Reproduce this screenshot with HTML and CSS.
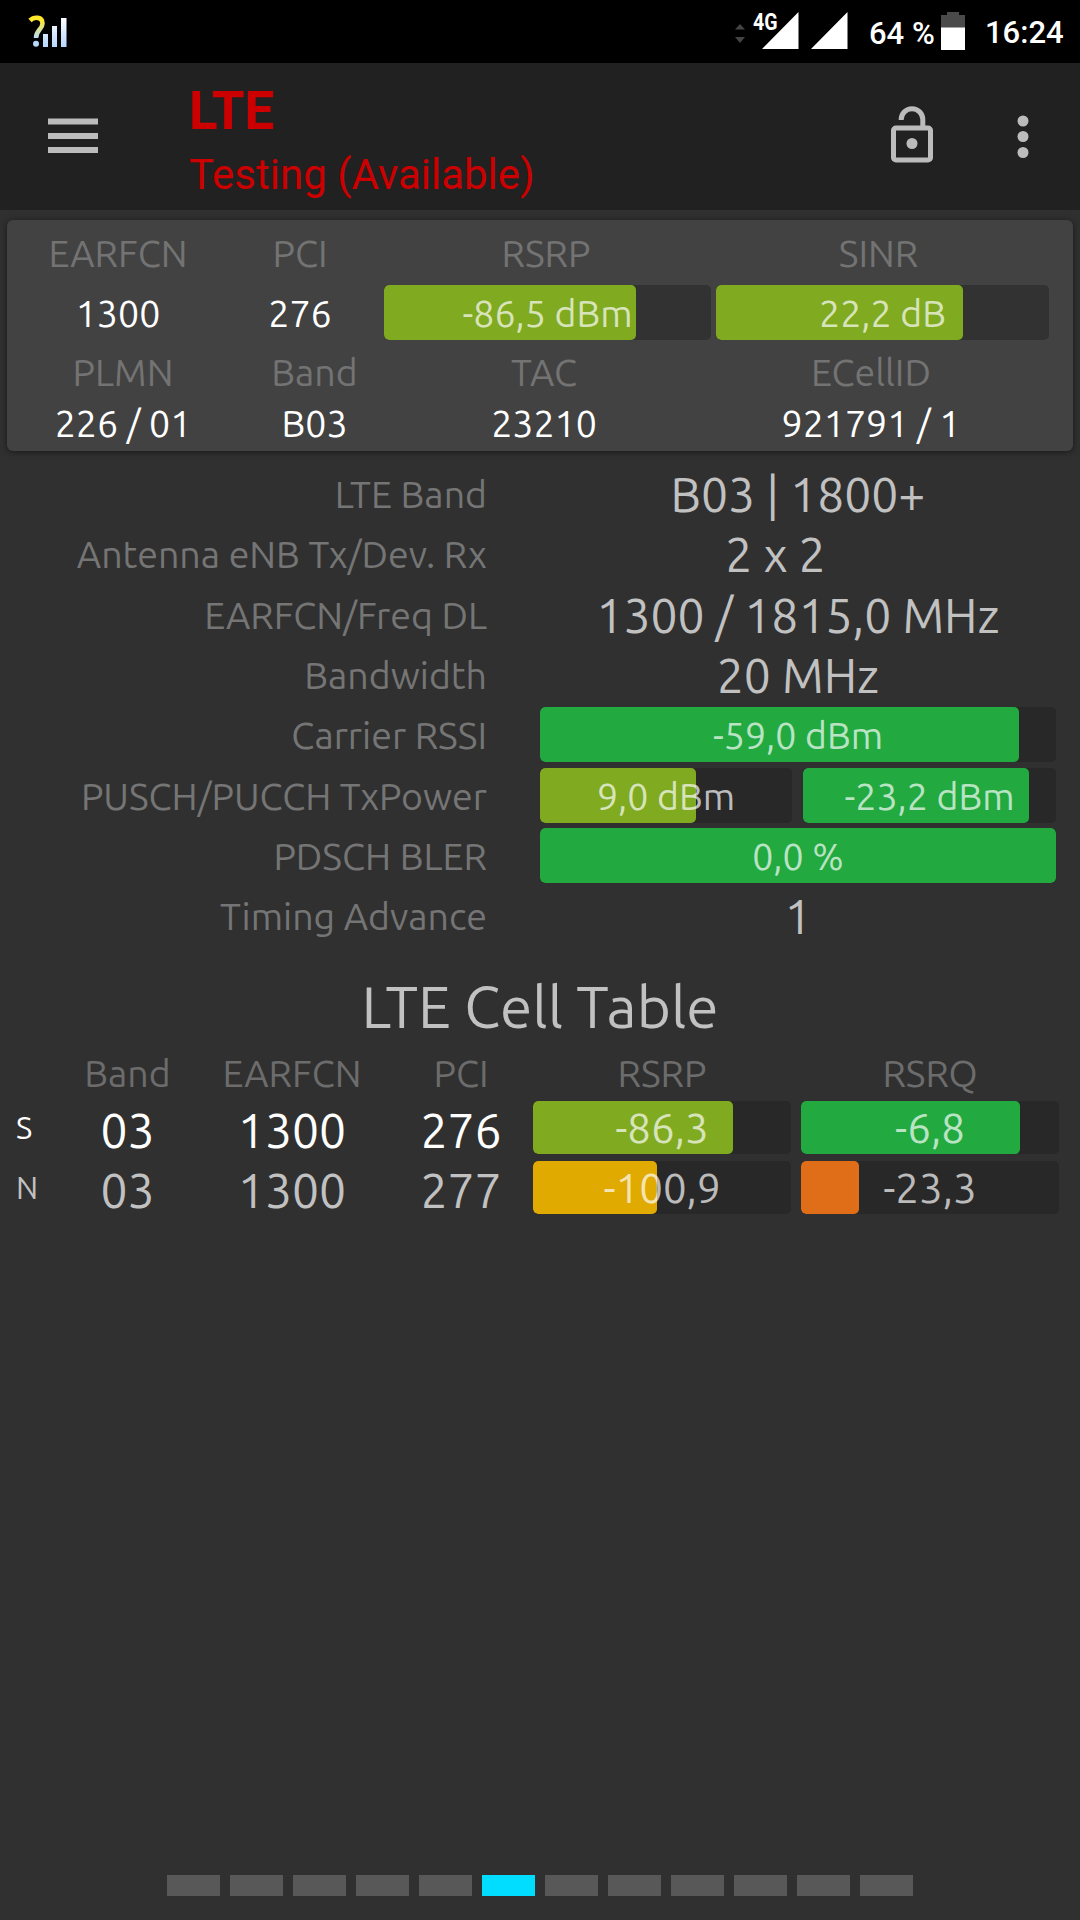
FILE: index.html
```html
<!DOCTYPE html>
<html lang="en">
<head>
  <meta charset="UTF-8">
  <meta name="viewport" content="width=device-width, initial-scale=1.0">
  <title>LTE</title>
  <link rel="stylesheet" href="styles.css">
</head>
<body>
  <header class="status-bar">
    <svg class="unknown-signal" width="40" height="36" viewBox="0 0 40 36">
      <defs>
        <linearGradient id="question" x1="0" y1="0" x2="0" y2="1">
          <stop offset="0.1" stop-color="#ffe928"/>
          <stop offset="1" stop-color="#b8dcff"/>
        </linearGradient>
        <linearGradient id="bars" x1="0" y1="0" x2="0" y2="1">
          <stop offset="0" stop-color="#ffffff"/>
          <stop offset="1" stop-color="#b5d7ff"/>
        </linearGradient>
      </defs>
      <path d="M2 6.500C6 2.500 14.500 2.500 14.500 9.500C14.500 15.500 8 16 8 24" fill="none" stroke="url(#question)" stroke-width="4.600"/>
      <circle cx="8" cy="29.800" r="3" fill="#b5d9fb"/>
      <path d="M15 20h5v13h-5zM24 12h5v21h-5zM33 4h5.500v29H33z" fill="url(#bars)"/>
    </svg>
    <svg class="signals" width="114" height="38" viewBox="0 0 114 38">
      <path d="M1 17.500L6 12l5 5.500zM1 25h10L6 31z" fill="#444"/>
      <path d="M28 37L64.500 0v37zM77 37L113.500 0v37z" fill="#fff"/>
      <text class="network-type" x="19" y="17.500" textLength="24.500" lengthAdjust="spacingAndGlyphs">4G</text>
    </svg>
    <span class="battery-level">64 %</span>
    <svg class="battery" width="24" height="38" viewBox="0 0 24 38">
      <path d="M0 3h6V0h12v3h6v13H0z" fill="#4a4a4a"/>
      <path d="M0 15.500h24V38H0z" fill="#fff"/>
    </svg>
    <span class="clock">16:24</span>
  </header>

  <nav class="app-bar">
    <svg class="menu-icon" width="50" height="36" viewBox="0 0 50 36">
      <path d="M0 .5h50v6H0zM0 15h50v6H0zM0 29h50v6H0z" fill="#bcbcbc"/>
    </svg>
    <div class="titles">
      <h1>LTE</h1>
      <p>Testing (Available)</p>
    </div>
    <svg class="lock-icon" width="44" height="58" viewBox="0 0 44 58" fill="none" stroke="#bcbcbc" stroke-width="5">
      <rect x="3.500" y="22" width="37" height="32" rx="2.500"/>
      <path d="M11.200 14V13.500A10.800 10.800 0 0 1 32.800 13.500V21"/>
      <circle cx="22" cy="37.500" r="5.500" fill="#bcbcbc" stroke="none"/>
    </svg>
    <svg class="more-icon" width="12" height="44" viewBox="0 0 12 44" fill="#bcbcbc">
      <circle cx="6" cy="6" r="5.500"/>
      <circle cx="6" cy="21.500" r="5.500"/>
      <circle cx="6" cy="37.500" r="5.500"/>
    </svg>
  </nav>

  <main>
    <section class="card">
      <div class="card-top">
        <div class="label">EARFCN</div>
        <div class="label">PCI</div>
        <div class="label">RSRP</div>
        <div class="label sinr-label">SINR</div>
        <div class="value">1300</div>
        <div class="value">276</div>
        <div class="bar"><div class="fill lime" style="width: 77.1%"></div><span>-86,5 dBm</span></div>
        <div class="bar sinr-bar"><div class="fill lime" style="width: 74.3%"></div><span>22,2 dB</span></div>
      </div>
      <div class="card-bottom">
        <div class="label">PLMN</div>
        <div class="label">Band</div>
        <div class="label">TAC</div>
        <div class="label">ECellID</div>
        <div class="value">226 / 01</div>
        <div class="value">B03</div>
        <div class="value">23210</div>
        <div class="value">921791 / 1</div>
      </div>
    </section>

    <section class="details">
      <div class="name">LTE Band</div>
      <div class="info">B03 | 1800+</div>
      <div class="name">Antenna eNB Tx/Dev. Rx</div>
      <div class="info antenna">2 x 2</div>
      <div class="name">EARFCN/Freq DL</div>
      <div class="info">1300 / 1815,0 MHz</div>
      <div class="name">Bandwidth</div>
      <div class="info">20 MHz</div>
      <div class="name">Carrier RSSI</div>
      <div class="bar"><div class="fill green" style="width: 92.8%"></div><span>-59,0 dBm</span></div>
      <div class="name">PUSCH/PUCCH TxPower</div>
      <div class="bar-pair">
        <div class="bar"><div class="fill lime" style="width: 61.9%"></div><span>9,0 dBm</span></div>
        <div class="bar"><div class="fill green" style="width: 89.3%"></div><span>-23,2 dBm</span></div>
      </div>
      <div class="name">PDSCH BLER</div>
      <div class="bar"><div class="fill green" style="width: 100%"></div><span>0,0 %</span></div>
      <div class="name">Timing Advance</div>
      <div class="info">1</div>
    </section>

    <h2>LTE Cell Table</h2>
    <section class="cells">
      <div class="cell-row cell-head">
        <div></div>
        <div class="label">Band</div>
        <div class="label">EARFCN</div>
        <div class="label">PCI</div>
        <div class="label">RSRP</div>
        <div class="label">RSRQ</div>
      </div>
      <div class="cell-row serving">
        <div class="type">S</div>
        <div>03</div>
        <div>1300</div>
        <div>276</div>
        <div class="bar"><div class="fill lime" style="width: 77.5%"></div><span>-86,3</span></div>
        <div class="bar"><div class="fill green" style="width: 84.8%"></div><span>-6,8</span></div>
      </div>
      <div class="cell-row">
        <div class="type">N</div>
        <div>03</div>
        <div>1300</div>
        <div>277</div>
        <div class="bar"><div class="fill yellow" style="width: 48.2%"></div><span>-100,9</span></div>
        <div class="bar"><div class="fill orange" style="width: 22.5%"></div><span>-23,3</span></div>
      </div>
    </section>
  </main>

  <footer class="pager">
    <i></i><i></i><i></i><i></i><i></i><i class="active"></i><i></i><i></i><i></i><i></i><i></i><i></i>
  </footer>
</body>
</html>
```
FILE: styles.css
```css
* {
  box-sizing: border-box;
}
body {
  margin: 0;
  width: 1080px;
  height: 1920px;
  display: flex;
  flex-direction: column;
  overflow: hidden;
  background: #303030;
  color: #c1c1c1;
  font-family: Ubuntu, "Noto Sans", sans-serif;
  font-size: 37.5px;
}
h1, h2, p {
  margin: 0;
}
svg {
  display: block;
  flex: none;
  overflow: visible;
}

/* Status bar */
.status-bar {
  height: 63px;
  flex: none;
  display: flex;
  align-items: flex-start;
  padding-left: 28px;
  background: #000;
  color: #fff;
  font: 500 31px/36px Roboto, sans-serif;
  white-space: nowrap;
}
.unknown-signal {
  margin-top: 14px;
}
.signals {
  margin: 12px 0 0 666px;
}
.network-type {
  fill: #fff;
  font: 700 23px Roboto, sans-serif;
}
.battery-level {
  width: 72px;
  margin-top: 16px;
  margin-left: 21px;
}
.battery {
  margin-top: 12px;
}
.clock {
  margin-top: 15px;
  margin-left: 20px;
}

/* App bar */
.app-bar {
  height: 147px;
  flex: none;
  display: flex;
  align-items: flex-start;
  padding-left: 48px;
  background: #212121;
  color: #c00;
  font-family: Roboto, sans-serif;
}
.menu-icon {
  margin-top: 55px;
}
.titles {
  width: 699px;
  margin-left: 91px;
  padding-top: 17px;
}
.titles h1 {
  font-size: 53px;
  font-weight: 700;
  line-height: 62px;
}
.titles p {
  font-size: 42px;
  line-height: 48px;
  margin-top: 9px;
}
.lock-icon {
  margin-top: 43px;
  margin-left: 1.5px;
}
.more-icon {
  margin-top: 52px;
  margin-left: 83px;
}

/* Progress bars */
.bar {
  position: relative;
  height: 55px;
  border-radius: 5px;
  overflow: hidden;
  background: #282828;
  color: rgba(255, 255, 255, 0.7);
  line-height: 56px;
  text-align: center;
}
.fill {
  position: absolute;
  top: 0;
  left: 0;
  height: 100%;
  border-radius: 5px;
}
.bar span {
  position: relative;
}
.lime {
  background: #80aa20;
}
.green {
  background: #22aa41;
}
.yellow {
  background: #e0aa00;
}
.orange {
  background: #e06e18;
}

/* Serving cell card */
.card {
  height: 231px;
  margin: 10px 7px 0;
  padding: 10px 0 0 10px;
  border-radius: 6px;
  background: #424242;
  box-shadow: 0 1px 6px rgba(0, 0, 0, 0.5);
  color: #fff;
  text-align: center;
}
.card-top, .card-bottom {
  display: grid;
}
.card-top {
  grid-template-columns: 202px 165px 327px 338px;
  grid-template-rows: 55px 55px;
}
.card-top .label:nth-child(n + 2), .card-top .value:nth-child(6) {
  padding-right: 3px;
}
.card-bottom {
  grid-template-columns: 212px 171px 288px 366px;
  grid-template-rows: 50px 50px;
  padding-top: 9px;
}
.card .bar {
  background: #323232;
}
.sinr-bar {
  margin-left: 5px;
}
.card-top .sinr-label {
  padding-right: 6px;
}
.label {
  color: #6c6c6c;
  line-height: 47px;
}
.card .label {
  color: #737373;
}
.value {
  line-height: 56px;
}
.card-bottom .value {
  line-height: 48px;
}

/* Detail rows */
.details {
  display: grid;
  grid-template-columns: 487px 516px;
  column-gap: 53px;
  grid-auto-rows: 60.35px;
  align-items: center;
  margin-top: 12.4px;
}
.name {
  padding-top: 1px;
  color: #757575;
  text-align: right;
  white-space: nowrap;
}
.info {
  padding-top: 1px;
  font-size: 48px;
  line-height: 60px;
  text-align: center;
}
.antenna {
  padding-right: 45px;
}
.bar-pair {
  display: grid;
  grid-template-columns: 252px 253px;
  gap: 11px;
}

/* Cell table */
h2 {
  margin-top: 20.6px;
  font-size: 58.5px;
  font-weight: 400;
  line-height: 78px;
  text-align: center;
}
.cells {
  padding: 5px 0 0 16px;
}
.cell-row {
  display: grid;
  grid-template-columns: 48px 127px 202px 140px 258px 258px;
  height: 60px;
  font-size: 48px;
  line-height: 58px;
  text-align: center;
}
.cell-row > :nth-child(4) {
  padding-right: 4px;
}
.cell-head {
  height: 51px;
  font-size: 37.5px;
}
.cell-head .label:last-child {
  padding-left: 20px;
}
.cell-row .bar {
  height: 53px;
  font-size: 42px;
  line-height: 54px;
}
.cell-row .bar:last-child {
  margin-left: 10px;
  margin-right: -10px;
}
.cell-row .type {
  font-size: 31px;
  line-height: 54px;
  text-align: left;
}
.serving {
  color: #fff;
}

/* Page indicator */
.pager {
  display: flex;
  gap: 10px;
  margin: auto 0 24px 167px;
}
.pager i {
  width: 53px;
  height: 21px;
  background: #585858;
}
.pager .active {
  background: #00ddff;
}
```
